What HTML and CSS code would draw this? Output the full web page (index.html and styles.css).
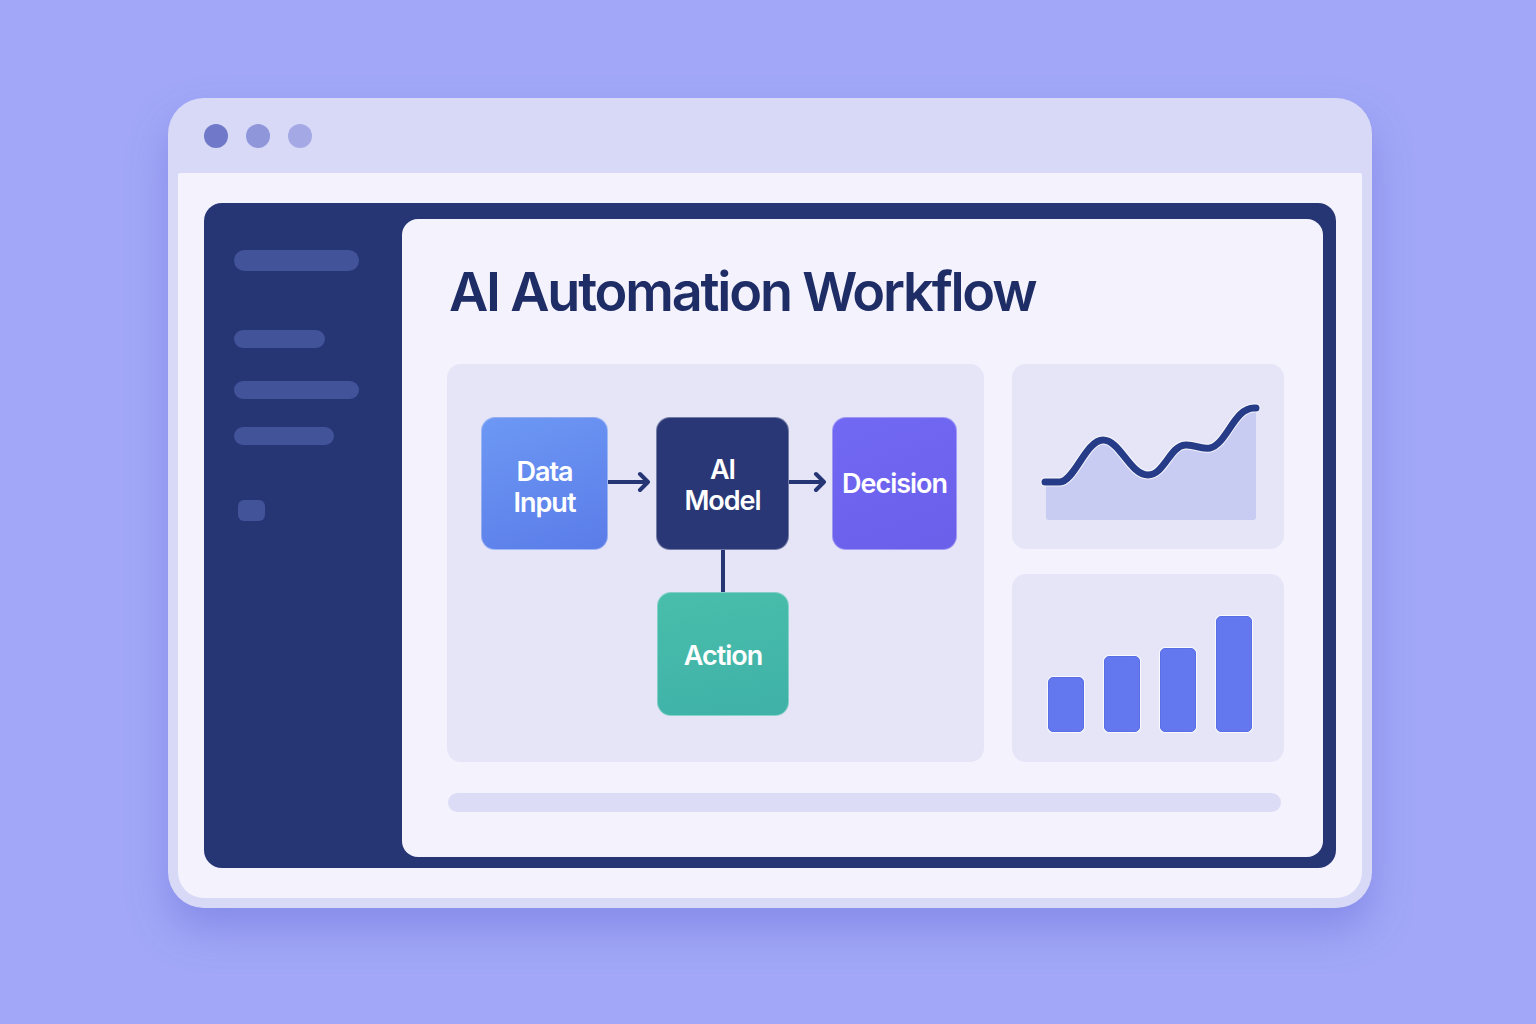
FILE: index.html
```html
<!DOCTYPE html>
<html lang="en">
<head>
<meta charset="utf-8">
<title>AI Automation Workflow</title>
<link rel="stylesheet" href="styles.css">
</head>
<body>
<div class="window">
  <div class="titlebar">
    <span class="dot dot-1"></span>
    <span class="dot dot-2"></span>
    <span class="dot dot-3"></span>
  </div>
  <div class="viewport">
    <div class="app">
      <aside class="sidebar">
        <span class="pill pill-head"></span>
        <span class="pill pill-a"></span>
        <span class="pill pill-b"></span>
        <span class="pill pill-c"></span>
        <span class="pill pill-sq"></span>
      </aside>
      <main class="content">
        <h1 class="title">AI Automation Workflow</h1>
        <div class="row">
          <section class="diagram">
            <div class="node node-input">Data<br>Input</div>
            <div class="arrow arrow-1">
              <svg width="48" height="24" viewBox="0 0 48 24"><path d="M0 12 H40 M32 4 L40 12 L32 20" fill="none" stroke="#263574" stroke-width="4" stroke-linecap="round" stroke-linejoin="round"/></svg>
            </div>
            <div class="node node-model">AI<br>Model</div>
            <div class="arrow arrow-2">
              <svg width="43" height="24" viewBox="0 0 43 24"><path d="M0 12 H35 M27 4 L35 12 L27 20" fill="none" stroke="#263574" stroke-width="4" stroke-linecap="round" stroke-linejoin="round"/></svg>
            </div>
            <div class="node node-decision">Decision</div>
            <div class="vline"></div>
            <div class="node node-action">Action</div>
          </section>
          <div class="side">
            <section class="card card-line">
              <svg width="272" height="185" viewBox="0 0 272 185">
                <path d="M34 118 H48 C62 118 74 76 91 76 C108 76 118 111 136 111 C152 111 158 82 173 81 C183 80 188 86 198 84 C215 80 222 44 242 44 L244 44 L244 153 Q244 156 241 156 L37 156 Q34 156 34 153 Z" fill="#c8cbf2"/>
                <path d="M33 118 H48 C62 118 74 76 91 76 C108 76 118 111 136 111 C152 111 158 82 173 81 C183 80 188 86 198 84 C215 80 222 44 242 44 H244" fill="none" stroke="#ffffff" stroke-opacity="0.8" stroke-width="9" stroke-linecap="round" stroke-linejoin="round"/>
                <path d="M33 118 H48 C62 118 74 76 91 76 C108 76 118 111 136 111 C152 111 158 82 173 81 C183 80 188 86 198 84 C215 80 222 44 242 44 H244" fill="none" stroke="#273c88" stroke-width="7" stroke-linecap="round" stroke-linejoin="round"/>
              </svg>
            </section>
            <section class="card card-bars">
              <span class="bar" style="height:55px"></span>
              <span class="bar" style="height:76px"></span>
              <span class="bar" style="height:84px"></span>
              <span class="bar" style="height:116px"></span>
            </section>
          </div>
        </div>
        <div class="progress"></div>
      </main>
    </div>
  </div>
</div>
</body>
</html>
```
FILE: styles.css
```css
* { box-sizing: border-box; }
html, body { margin: 0; }
body {
  width: 1536px;
  height: 1024px;
  background: #a2a8f7;
  padding: 98px 0 0 168px;
  font-family: Inter, "Noto Sans", sans-serif;
  overflow: hidden;
}
.window {
  width: 1204px;
  height: 810px;
  background: #d8d9f6;
  border-radius: 36px;
  padding: 0 10px 10px;
  display: flex;
  flex-direction: column;
  box-shadow: 0 22px 40px rgba(84, 88, 205, 0.35);
}
.titlebar {
  height: 75px;
  display: flex;
  align-items: center;
  gap: 18px;
  padding: 0 0 0 26px;
}
.dot {
  width: 24px;
  height: 24px;
  border-radius: 50%;
}
.dot-1 { background: #7079c9; }
.dot-2 { background: #8f96da; }
.dot-3 { background: #a4a9e5; }
.viewport {
  flex: 1;
  background: #f3f2fd;
  border-radius: 2px 2px 26px 26px;
  padding: 30px 27px 30px 26px;
  display: flex;
}
.app {
  flex: 1;
  background: #263574;
  border-radius: 18px;
  display: flex;
}
.sidebar {
  width: 198px;
  flex: none;
  display: flex;
  flex-direction: column;
  align-items: flex-start;
  padding: 47px 0 0 30px;
}
.pill {
  display: block;
  background: #43539a;
  border-radius: 10px;
  height: 18px;
}
.pill-head { width: 125px; height: 21px; border-radius: 11px; }
.pill-a { width: 91px; margin-top: 59px; }
.pill-b { width: 125px; margin-top: 33px; }
.pill-c { width: 100px; margin-top: 28px; }
.pill-sq { width: 27px; height: 21px; border-radius: 6px; margin-top: 55px; margin-left: 4px; }
.content {
  flex: 1;
  background: #f3f2fd;
  border-radius: 16px;
  margin: 16px 13px 11px 0;
  padding: 39px 39px 0 45px;
  display: flex;
  flex-direction: column;
}
.title {
  margin: 0 0 38px 2px;
  font-size: 54px;
  line-height: 68px;
  font-weight: 600;
  letter-spacing: -2.2px;
  color: #1f2d66;
}
.row {
  display: flex;
  gap: 28px;
  height: 398px;
}
.diagram {
  width: 537px;
  background: #e6e5f8;
  border-radius: 14px;
  padding: 53px 0 0 34px;
  display: grid;
  grid-template-columns: 127px 48px 133px 43px 125px;
  grid-template-rows: 133px 42px 124px;
  align-content: start;
}
.node {
  border-radius: 14px;
  color: #ffffff;
  font-size: 27px;
  line-height: 31px;
  font-weight: 600;
  letter-spacing: -1px;
  display: flex;
  align-items: center;
  justify-content: center;
  text-align: center;
  border: 1px solid rgba(255,255,255,0.35);
}
.node-input { background: linear-gradient(160deg, #6d98f4, #5a7ce8); grid-column: 1; grid-row: 1; padding-top: 6px; }
.node-model { background: #293776; grid-column: 3; grid-row: 1; padding-top: 2px; }
.node-decision { background: linear-gradient(160deg, #7168f4, #6a5fe9); grid-column: 5; grid-row: 1; }
.node-action { background: linear-gradient(170deg, #49beab, #3fb1a8); grid-column: 3; grid-row: 3; margin-left: 1px; padding-top: 2px; }
.arrow { display: flex; align-items: center; padding-bottom: 3px; }
.arrow-1 { grid-column: 2; grid-row: 1; }
.arrow-2 { grid-column: 4; grid-row: 1; }
.vline {
  grid-column: 3;
  grid-row: 2;
  justify-self: center;
  width: 4px;
  background: #263574;
}
.side {
  width: 272px;
  display: flex;
  flex-direction: column;
  gap: 25px;
}
.card {
  background: #e6e5f8;
  border-radius: 14px;
}
.card-line { height: 185px; }
.card-line svg { display: block; }
.card-bars {
  height: 188px;
  display: flex;
  align-items: flex-end;
  gap: 20px;
  padding: 0 0 30px 36px;
}
.bar {
  width: 36px;
  background: #6378ee;
  border-radius: 5px;
  border: 1px solid #5a6de6;
  box-shadow: 0 0 0 1px rgba(255,255,255,0.8);
}
.progress {
  margin-top: 31px;
  width: 833px;
  margin-left: 1px;
  height: 19px;
  border-radius: 10px;
  background: #dcdcf6;
}
```
